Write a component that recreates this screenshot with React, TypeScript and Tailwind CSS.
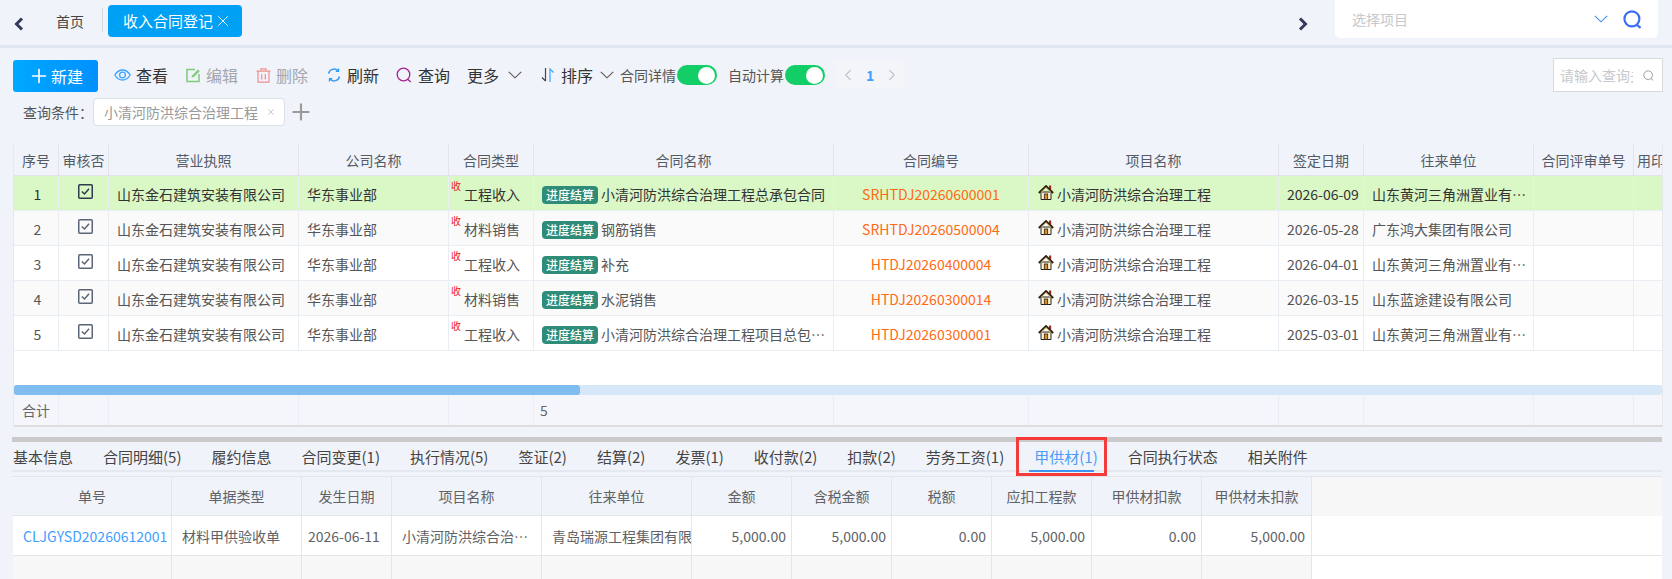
import { ChevronLeft, ChevronRight, Plus, X } from "lucide-react";

const rows = [
  { no: 1, type: "工程收入", name: "小清河防洪综合治理工程总承包合同", code: "SRHTDJ20260600001", date: "2026-06-09", partner: "山东黄河三角洲置业有限公司" },
  { no: 2, type: "材料销售", name: "钢筋销售", code: "SRHTDJ20260500004", date: "2026-05-28", partner: "广东鸿大集团有限公司" },
  { no: 3, type: "工程收入", name: "补充", code: "HTDJ20260400004", date: "2026-04-01", partner: "山东黄河三角洲置业有限公司" },
  { no: 4, type: "材料销售", name: "水泥销售", code: "HTDJ20260300014", date: "2026-03-15", partner: "山东蓝途建设有限公司" },
  { no: 5, type: "工程收入", name: "小清河防洪综合治理工程项目总包合同补充协议", code: "HTDJ20260300001", date: "2025-03-01", partner: "山东黄河三角洲置业有限公司" },
];

const tabs = ["基本信息", "合同明细(5)", "履约信息", "合同变更(1)", "执行情况(5)", "签证(2)", "结算(2)", "发票(1)", "收付款(2)", "扣款(2)", "劳务工资(1)", "甲供材(1)", "合同执行状态", "相关附件"];

const th = "h-[32px] p-0 pt-[2px] border-r border-b border-[#e2e4e8] bg-[#f0f3f9] font-normal text-center text-[#555b66] whitespace-nowrap overflow-hidden";
const td = "h-[35px] p-0 pt-[2px] border-r border-b border-[#e9edf4] whitespace-nowrap overflow-hidden text-ellipsis";
const sumTd = "h-[30px] p-0 border-r border-[#e9edf4] text-[#666] whitespace-nowrap";
const th2 = "h-[39px] p-0 border-r border-b border-[#e2e4e8] bg-[#f0f3f9] font-normal text-center text-[#606266] whitespace-nowrap";
const td2 = "h-[40px] p-0 pt-[1px] border-r border-b border-[#e6e6e6] whitespace-nowrap overflow-hidden";

function UpperCols() {
  return (
    <colgroup>
      <col className="w-[45px]" />
      <col className="w-[50px]" />
      <col className="w-[190px]" />
      <col className="w-[150px]" />
      <col className="w-[85px]" />
      <col className="w-[300px]" />
      <col className="w-[195px]" />
      <col className="w-[250px]" />
      <col className="w-[85px]" />
      <col className="w-[170px]" />
      <col className="w-[100px]" />
      <col className="w-[80px]" />
    </colgroup>
  );
}

function BoldChevron({ right }: { right?: boolean }) {
  return (
    <svg width="10" height="14" viewBox="0 0 10 14" fill="none" stroke="#343a5e" strokeWidth="3">
      <polyline points={right ? "2,1.5 7.5,7 2,12.5" : "8,1.5 2.5,7 8,12.5"} />
    </svg>
  );
}

function ThinChevron({ color, className }: { color: string; className?: string }) {
  return (
    <svg width="14" height="8" viewBox="0 0 14 8" fill="none" stroke={color} strokeWidth="1.100" className={className}>
      <polyline points="0.800,0.800 7,6.800 13.200,0.800" />
    </svg>
  );
}

function SearchIcon({ size, color, weight, className }: { size: number; color: string; weight: number; className?: string }) {
  return (
    <svg width={size} height={size} viewBox="0 0 16 16" fill="none" stroke={color} strokeWidth={weight} className={className}>
      <circle cx="7.500" cy="7.500" r="6.300" />
      <path d="M11.500 12.300L14.800 15" />
    </svg>
  );
}

function EyeIcon() {
  return (
    <svg width="17" height="14" viewBox="0 0 17 14" fill="none" stroke="#3ba5ff" strokeWidth="1.300">
      <path d="M0.800 7C3 3.400 5.600 2 8.500 2s5.500 1.400 7.700 5c-2.200 3.600-4.800 5-7.700 5S3 10.600 0.800 7z" />
      <circle cx="8.500" cy="7" r="2.900" />
    </svg>
  );
}

function EditIcon() {
  return (
    <svg width="15" height="15" viewBox="0 0 15 15" fill="none">
      <path d="M9 1.600H1v12h12V6" stroke="#7ccc7a" strokeWidth="1.500" />
      <path d="M5.500 9.800l0.600-2.400L12 1.500l1.700 1.700-5.900 5.900z" fill="#7ccc7a" />
    </svg>
  );
}

function TrashIcon() {
  return (
    <svg width="15" height="15" viewBox="0 0 15 15" fill="none" stroke="#f0908f" strokeWidth="1.200">
      <path d="M0.500 3.200h14M5 3V0.900h5V3M2 3.200v11h11v-11M5.700 6v5.600M9.300 6v5.600" />
    </svg>
  );
}

function RefreshIcon() {
  return (
    <svg width="14" height="14" viewBox="0 0 14 14" fill="none" stroke="#2f9bf5" strokeWidth="1.400">
      <path d="M1.500 5.500A5.700 5.700 0 0 1 11 2.700" />
      <path d="M12.500 8.500A5.700 5.700 0 0 1 3 11.300" />
      <polyline points="11.600,0.600 11.400,3.300 8.800,3.200" />
      <polyline points="2.400,13.400 2.600,10.700 5.200,10.800" />
    </svg>
  );
}

function SortIcon() {
  return (
    <svg width="14" height="16" viewBox="0 0 14 16" fill="none" strokeWidth="1.200">
      <path d="M4.500 1v13M1 10.500L4.500 14" stroke="#444" />
      <path d="M9 15V2l3.500 3.500" stroke="#3ba5ff" />
    </svg>
  );
}

function HouseIcon() {
  return (
    <svg width="16" height="15" viewBox="0 0 16 15" className="mb-[4px] shrink-0">
      <rect x="11" y="0.500" width="2.200" height="4" fill="#a52a1e" />
      <path d="M3 7h10v7.500H3z" fill="#fff3d0" stroke="#222" strokeWidth="1" />
      <path d="M0.800 8L8 1l7.200 7" fill="none" stroke="#2a1e0e" strokeWidth="1.800" />
      <path d="M3 7.500L8 2.800l5 4.700" fill="none" stroke="#e8c878" strokeWidth="1" />
      <rect x="6.300" y="9" width="3.400" height="5.500" fill="#e08a1e" stroke="#222" strokeWidth="0.800" />
    </svg>
  );
}

function CheckBox({ dark }: { dark: boolean }) {
  const color = dark ? "#2c3a4c" : "#5b6577";
  return (
    <svg width="15" height="15" viewBox="0 0 15 15" fill="none" stroke={color}>
      <rect x="0.750" y="0.750" width="13.500" height="13.500" rx="1" strokeWidth="1.500" />
      <polyline points="3.800,7.500 6.500,10 11,4.800" strokeWidth="1.500" />
    </svg>
  );
}

function Switch({ className }: { className: string }) {
  return (
    <span className={`flex h-[20px] w-[40px] items-center justify-end rounded-full bg-[#13ce66] pr-[2px] ${className}`}>
      <span className="h-[17px] w-[17px] rounded-full bg-white" />
    </span>
  );
}

function ToolItem({ icon, label, className, muted }: { icon: React.ReactNode; label: string; className: string; muted?: boolean }) {
  return (
    <span className={`flex items-center ${className}`}>
      {icon}
      <span className={`text-[16px] ${muted ? "text-[#a3a6ad]" : "text-[#333]"}`}>{label}</span>
    </span>
  );
}

export default function App() {
  return (
    <div className="h-[579px] w-[1672px] overflow-hidden bg-[#f0f3f9] font-['Noto_Sans_CJK_SC','Noto_Sans',sans-serif] text-[14px] text-[#555]">
      {/* top tabs */}
      <div className="flex h-[48px] items-start border-b-[3px] border-[#dfe6ef]">
        <span className="ml-[14px] mt-[17px]"><BoldChevron /></span>
        <span className="ml-[32px] mt-[11px] text-[#444] leading-[20px]">首页</span>
        <span className="ml-[18px] mt-[8px] h-[24px] w-px bg-[#d5d9e0]" />
        <div className="ml-[5px] mt-[5px] flex h-[32px] w-[134px] items-center rounded-[4px] bg-[#00a0f5] pl-[15px] text-[15px] text-white">
          收入合同登记
          <X className="ml-[1px]" size={18} strokeWidth={1.200} />
        </div>
        <span className="ml-[1056px] mt-[17px]"><BoldChevron right /></span>
        <div className="ml-[27px] flex h-[38px] w-[323px] items-center rounded-b-[5px] bg-white pl-[17px] pr-[16px]">
          <span className="text-[#c5c8ce]">选择项目</span>
          <ThinChevron color="#3b8ff0" className="ml-auto" />
          <SearchIcon size={19} color="#3b6cf5" weight={1.800} className="ml-[15px]" />
        </div>
      </div>

      {/* toolbar */}
      <div className="mt-[10px] flex h-[34px] items-center pl-[13px] pr-[9px]">
        <button className="mt-[2px] flex h-[32px] w-[85px] items-center justify-center rounded-[3px] bg-gradient-to-r from-[#00a8ff] to-[#0090ff] text-[16px] text-white">
          <Plus size={22} strokeWidth={1.800} className="mr-[1px]" />
          新建
        </button>
        <ToolItem className="ml-[16px] gap-[5px]" icon={<EyeIcon />} label="查看" />
        <ToolItem className="ml-[18px] gap-[5px]" muted icon={<EditIcon />} label="编辑" />
        <ToolItem className="ml-[18px] gap-[5px]" muted icon={<TrashIcon />} label="删除" />
        <ToolItem className="ml-[19px] gap-[6px]" icon={<RefreshIcon />} label="刷新" />
        <ToolItem className="ml-[17px] gap-[6px]" icon={<SearchIcon size={16} color="#a8228e" weight={1.300} />} label="查询" />
        <span className="ml-[17px] text-[16px] text-[#333]">更多</span>
        <ThinChevron color="#555" className="ml-[9px]" />
        <ToolItem className="ml-[19px] gap-[6px]" icon={<SortIcon />} label="排序" />
        <ThinChevron color="#555" className="ml-[7px]" />
        <span className="ml-[6px] text-[#555]">合同详情</span>
        <Switch className="ml-[1px]" />
        <span className="ml-[11px] text-[#555]">自动计算</span>
        <Switch className="ml-[1px]" />
        <div className="ml-[10px] flex h-[28px] w-[70px] items-center justify-between bg-[#f4f5f8] px-[4px]">
          <ChevronLeft size={18} strokeWidth={1.600} className="text-[#c0c4cc]" />
          <span className="font-semibold text-[#409eff]">1</span>
          <ChevronRight size={18} strokeWidth={1.600} className="text-[#c0c4cc]" />
        </div>
        <div className="ml-auto flex h-[34px] w-[110px] items-center border border-[#d9dadc] bg-white pl-[6px] pr-[8px]">
          <span className="w-[73px] overflow-hidden whitespace-nowrap text-[#c5c8ce]">请输入查询关键字</span>
          <SearchIcon size={11} color="#999" weight={1.400} className="ml-auto" />
        </div>
      </div>

      {/* query condition */}
      <div className="mt-[6px] flex h-[28px] items-center pl-[23px]">
        <span className="text-[#555]">查询条件：</span>
        <div className="flex h-[28px] w-[192px] items-center rounded-[4px] border border-[#dcdfe6] bg-white pl-[10px] text-[#999]">
          小清河防洪综合治理工程
          <X className="ml-[8px]" size={10} strokeWidth={1.300} />
        </div>
        <Plus className="ml-[3px] text-[#9a9a9a]" size={26} strokeWidth={2} />
      </div>

      {/* contract table */}
      <div className="ml-[13px] mt-[18px] w-[1650px] overflow-hidden border-x border-b-2 border-x-[#e6e8ec] border-b-[#dedede]">
        <div className="h-[241px] overflow-hidden bg-white">
          <table className="w-[1700px] table-fixed border-separate border-spacing-0">
            <UpperCols />
            <thead>
              <tr>
                {["序号", "审核否", "营业执照", "公司名称", "合同类型", "合同名称", "合同编号", "项目名称", "签定日期", "往来单位", "合同评审单号"].map((h) => (
                  <th key={h} className={th}>{h}</th>
                ))}
                <th className={`${th} pl-[3px] text-left`}>用印</th>
              </tr>
            </thead>
            <tbody>
              {rows.map((r) => {
                const bg = r.no === 1 ? "bg-[#daf8c5] text-[#333]" : r.no % 2 === 0 ? "bg-[#fafafa] text-[#555]" : "bg-white text-[#555]";
                return (
                  <tr key={r.no} className={bg}>
                    <td className={`${td} pl-[3px] text-center`}>{r.no}</td>
                    <td className={`${td} text-center`}>
                      <span className="mb-[5px] ml-[4px] flex justify-center"><CheckBox dark={r.no === 1} /></span>
                    </td>
                    <td className={`${td} px-[8px]`}>山东金石建筑安装有限公司</td>
                    <td className={`${td} px-[8px]`}>华东事业部</td>
                    <td className={`${td} relative pl-[2px] text-center`}>
                      <span className="absolute left-[2px] top-[2px] text-[10px] text-[#f0142f]">收</span>
                      {r.type}
                    </td>
                    <td className={`${td} pl-[8px]`}>
                      <span className="flex items-center">
                        <span className="mr-[3px] mt-[2px] flex h-[18px] w-[56px] shrink-0 items-center justify-center rounded-[4px] bg-[#2f8c78] text-[12px] font-medium text-white">进度结算</span>
                        <span className="overflow-hidden text-ellipsis pr-[8px]">{r.name}</span>
                      </span>
                    </td>
                    <td className={`${td} text-center text-[#ff6a13]`}>{r.code}</td>
                    <td className={`${td} px-[9px]`}>
                      <span className="flex items-center gap-[3px]">
                        <HouseIcon />
                        小清河防洪综合治理工程
                      </span>
                    </td>
                    <td className={`${td} pl-[8px]`}>{r.date}</td>
                    <td className={`${td} pl-[8px] pr-[7px]`}>{r.partner}</td>
                    <td className={td} />
                    <td className={td} />
                  </tr>
                );
              })}
            </tbody>
          </table>
        </div>
        <div className="h-[10px] rounded-[3px] bg-[#d6e7f7]">
          <div className="h-[10px] w-[566px] rounded-[3px] bg-[#7fbdf0]" />
        </div>
        <table className="w-[1700px] table-fixed border-separate border-spacing-0 bg-[#f4f6fb]">
          <UpperCols />
          <tbody>
            <tr>
              <td className={`${sumTd} text-center`}>合计</td>
              <td className={sumTd} />
              <td className={sumTd} />
              <td className={sumTd} />
              <td className={sumTd} />
              <td className={`${sumTd} pl-[6px]`}>5</td>
              <td className={sumTd} />
              <td className={sumTd} />
              <td className={sumTd} />
              <td className={sumTd} />
              <td className={sumTd} />
              <td className={sumTd} />
            </tr>
          </tbody>
        </table>
      </div>

      {/* detail tabs */}
      <div className="ml-[12px] mt-[10px] h-[5px] w-[1650px] bg-[#cacaca]" />
      <div className="ml-[12px] flex h-[30px] w-[1650px] gap-[30px] border-b-2 border-[#e4e8ef] pl-[1px] text-[15px] text-[#444]">
        {tabs.map((t) =>
          t === "甲供材(1)" ? (
            <span key={t} className="relative flex items-center pt-[2px] text-[#4a9cf5]">
              {t}
              <span className="absolute -bottom-[2px] -left-[5px] right-[4px] h-[2px] bg-[#3f94f0]" />
              <span className="absolute -bottom-[6px] -left-[18px] -right-[9px] -top-[5px] border-[3px] border-[#f43b3b]" />
            </span>
          ) : (
            <span key={t} className="flex items-center pt-[2px]">{t}</span>
          ),
        )}
      </div>

      {/* detail table */}
      <div className="ml-[13px] mt-[4px] w-[1649px] border-t border-[#e2e4e8]">
        <table className="w-full table-fixed border-separate border-spacing-0 bg-white text-[#606266]">
          <colgroup>
            <col className="w-[159px]" />
            <col className="w-[130px]" />
            <col className="w-[90px]" />
            <col className="w-[150px]" />
            <col className="w-[150px]" />
            <col className="w-[100px]" />
            <col className="w-[100px]" />
            <col className="w-[100px]" />
            <col className="w-[100px]" />
            <col className="w-[110px]" />
            <col className="w-[110px]" />
            <col />
          </colgroup>
          <thead>
            <tr>
              {["单号", "单据类型", "发生日期", "项目名称", "往来单位", "金额", "含税金额", "税额", "应扣工程款", "甲供材扣款", "甲供材未扣款"].map((h) => (
                <th key={h} className={th2}>{h}</th>
              ))}
              <th className="bg-[#f7f7f7] p-0" />
            </tr>
          </thead>
          <tbody>
            <tr>
              <td className={`${td2} pl-[10px] text-[#409eff]`}>CLJGYSD20260612001</td>
              <td className={`${td2} pl-[10px]`}>材料甲供验收单</td>
              <td className={`${td2} pl-[6px]`}>2026-06-11</td>
              <td className={`${td2} overflow-hidden text-ellipsis px-[10px]`}>小清河防洪综合治理工程</td>
              <td className={`${td2} pl-[10px]`}>青岛瑞源工程集团有限公司</td>
              <td className={`${td2} pr-[5px] text-right`}>5,000.00</td>
              <td className={`${td2} pr-[5px] text-right`}>5,000.00</td>
              <td className={`${td2} pr-[5px] text-right`}>0.00</td>
              <td className={`${td2} pr-[6px] text-right`}>5,000.00</td>
              <td className={`${td2} pr-[5px] text-right`}>0.00</td>
              <td className={`${td2} pr-[6px] text-right`}>5,000.00</td>
              <td className="h-[40px] border-b border-[#e6e6e6] p-0" />
            </tr>
            <tr>
              {Array.from({ length: 11 }, (_, i) => (
                <td key={i} className="h-[40px] border-r border-[#e6e6e6] bg-[#f7f7f7] p-0" />
              ))}
              <td className="p-0" />
            </tr>
          </tbody>
        </table>
      </div>
    </div>
  );
}
